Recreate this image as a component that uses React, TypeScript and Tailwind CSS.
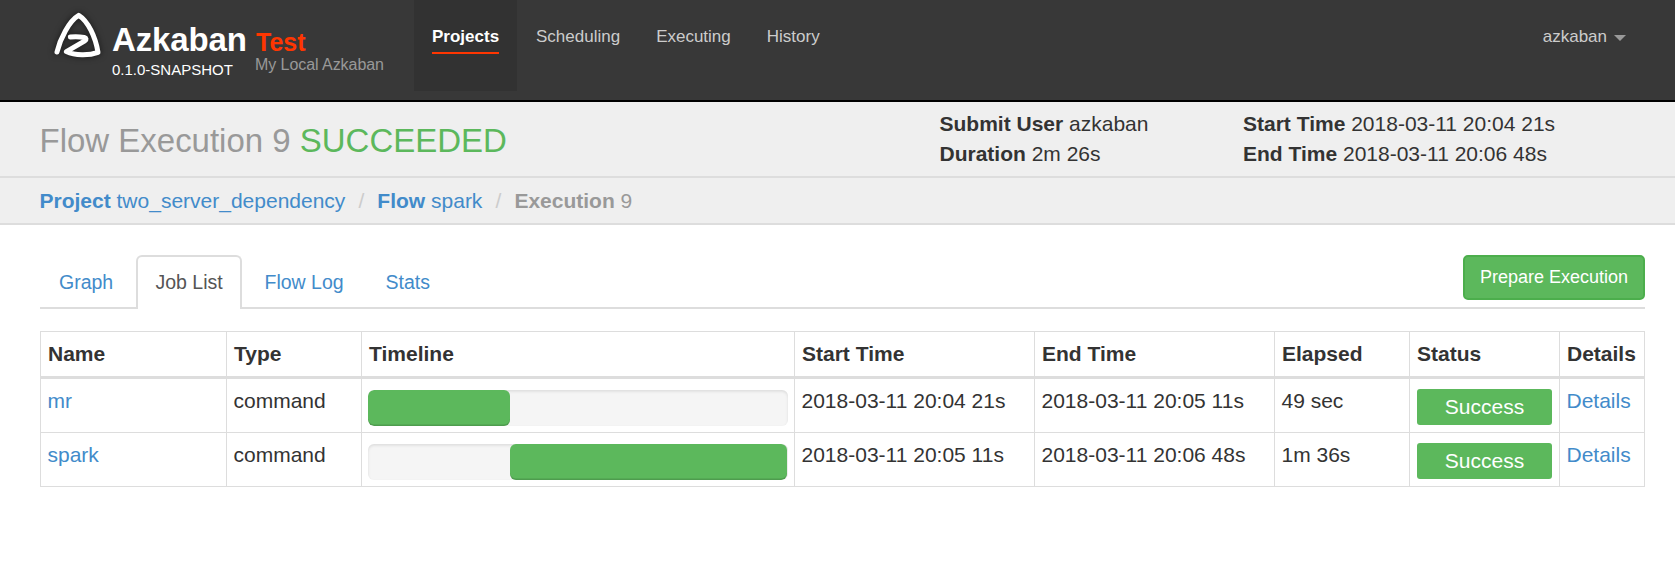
import React from "react";

type Job = {
  name: string;
  type: string;
  start: string;
  end: string;
  elapsed: string;
  offset: number;
  width: number;
};

const jobs: Job[] = [
  { name: "mr", type: "command", start: "2018-03-11 20:04 21s", end: "2018-03-11 20:05 11s", elapsed: "49 sec", offset: 0, width: 142 },
  { name: "spark", type: "command", start: "2018-03-11 20:05 11s", end: "2018-03-11 20:06 48s", elapsed: "1m 36s", offset: 142, width: 277 },
];

const columns = [
  { label: "Name", width: 186 },
  { label: "Type", width: 135 },
  { label: "Timeline", width: 433 },
  { label: "Start Time", width: 240 },
  { label: "End Time", width: 240 },
  { label: "Elapsed", width: 135 },
  { label: "Status", width: 150 },
  { label: "Details", width: 85 },
];

function Logo() {
  return (
    <svg
      className="block h-[60px] w-[60px] drop-shadow-[0_0_3px_rgba(0,0,0,0.6)]"
      viewBox="0 0 60 60"
      fill="none"
      stroke="#fff"
      strokeLinecap="round"
      strokeLinejoin="round"
    >
      <path
        strokeWidth="5"
        d="M9 48C12 35 21 17 30.7 11.4C40 17 47.5 33 50 48.4C41 51.8 27 51.8 18.4 47.6L36.8 36.8C38.6 35.4 38.4 34 36.2 33.4C31 32.6 27 32.6 22.4 33"
      />
    </svg>
  );
}

function Header() {
  return (
    <header className="flex h-[102px] items-start border-b-2 border-black bg-[#383838]">
      <div className="w-[64px] shrink-0 pl-[48px] pt-[4px]">
        <Logo />
      </div>
      <div className="w-[144px] shrink-0 pl-[48px] pt-[20px] whitespace-nowrap text-white">
        <div className="text-[33px] leading-[40px] font-bold tracking-[-0.15px]">Azkaban</div>
        <div className="text-[15px] leading-[20px]">0.1.0-SNAPSHOT</div>
      </div>
      <div className="w-[206px] shrink-0 pl-[47px] pt-[27px] whitespace-nowrap">
        <div className="pl-px text-[25px] leading-[30px] font-bold text-[#ff3601]">Test</div>
        <div className="text-[16px] leading-[15px] tracking-[-0.06px] text-[#999]">My Local Azkaban</div>
      </div>
      <nav className="flex text-[17px] leading-[24px] text-[#ccc]">
        <a className="h-[91px] w-[103px] bg-[#323232] px-[18px] pt-[25px] font-bold text-white">
          <span className="block h-[29px] border-b-2 border-[#ff3601]">Projects</span>
        </a>
        <a className="pr-[18px] pl-[19px] pt-[25px]">Scheduling</a>
        <a className="px-[18px] pt-[25px]">Executing</a>
        <a className="px-[18px] pt-[25px]">History</a>
      </nav>
      <div className="ml-auto flex items-center gap-[7px] pt-[25px] pr-[49px] text-[17px] leading-[24px] text-[#ccc]">
        azkaban
        <span className="mt-[2px] h-0 w-0 border-x-[6px] border-t-[6px] border-x-transparent border-t-[#999]" />
      </div>
    </header>
  );
}

function Field({ label, value }: { label: string; value: string }) {
  return (
    <p>
      <strong>{label}</strong> {value}
    </p>
  );
}

function Summary() {
  return (
    <section className="flex h-[76px] items-start border-b-2 border-[#ddd] bg-[#efefef] pl-[39.5px] text-[21px] leading-[30px] text-[#333] whitespace-nowrap">
      <h1 className="w-[900px] pt-[21px] text-[33px] leading-[36px] tracking-[-0.01px] text-[#999]">
        Flow Execution 9 <span className="text-[#5cb85c]">SUCCEEDED</span>
      </h1>
      <div className="w-[303.5px] pt-[7px]">
        <Field label="Submit User" value="azkaban" />
        <Field label="Duration" value="2m 26s" />
      </div>
      <div className="pt-[7px]">
        <Field label="Start Time" value="2018-03-11 20:04 21s" />
        <Field label="End Time" value="2018-03-11 20:06 48s" />
      </div>
    </section>
  );
}

function Breadcrumb() {
  return (
    <div className="flex h-[47px] items-start border-b-2 border-[#ddd] bg-[#efefef] pt-[8px] pl-[39.5px] text-[21px] leading-[30px] text-[#428bca] whitespace-nowrap">
      <a><strong>Project</strong> two_server_dependency</a>
      <span className="w-[32px] text-center text-[#ccc]">/</span>
      <a><strong>Flow</strong> spark</a>
      <span className="w-[32px] text-center text-[#ccc]">/</span>
      <span className="text-[#999]"><strong>Execution</strong> 9</span>
    </div>
  );
}

function Tabs() {
  return (
    <div className="flex h-[54px] items-start border-b-2 border-[#ddd] text-[19.5px] leading-[30px] text-[#428bca] whitespace-nowrap">
      <a className="w-[96px] pt-[12px] pl-[19px]">Graph</a>
      <a className="h-[54px] w-[106px] rounded-t-[6px] border-2 border-b-0 border-[#ddd] bg-white pt-[10px] pl-[17.5px] text-[#555]">Job List</a>
      <a className="w-[121px] pt-[12px] pl-[22.5px]">Flow Log</a>
      <a className="pt-[12px] pl-[22.5px]">Stats</a>
      <button className="ml-auto h-[45px] w-[182px] rounded-[5px] border-2 border-[#4cae4c] bg-[#5cb85c] pb-[1px] text-[18px] leading-[40px] text-white">
        Prepare Execution
      </button>
    </div>
  );
}

function JobTable() {
  const cell = "border-r border-b border-[#ddd] pt-[7px] pl-[6.5px] align-top";
  return (
    <table className="mt-[22px] w-[1605px] table-fixed border-separate border-spacing-0 border-t border-l border-[#ddd] text-left text-[21px] leading-[30px] text-[#333] whitespace-nowrap">
      <colgroup>
        {columns.map((c) => (
          <col key={c.label} style={{ width: c.width }} />
        ))}
      </colgroup>
      <thead>
        <tr className="h-[47px]">
          {columns.map((c) => (
            <th key={c.label} className="border-r border-b-3 border-[#ddd] pt-[7px] pl-[7px] align-top">
              {c.label}
            </th>
          ))}
        </tr>
      </thead>
      <tbody>
        {jobs.map((job) => (
          <tr key={job.name} className="h-[54px]">
            <td className={cell + " text-[#428bca]"}>{job.name}</td>
            <td className={cell}>{job.type}</td>
            <td className="border-r border-b border-[#ddd] pt-[11px] pl-[6px] align-top">
              <div className="h-[36px] w-[420px] overflow-hidden rounded-[6px] bg-[#f5f5f5] shadow-[inset_0_1.5px_3px_rgba(0,0,0,0.1)]">
                <div
                  className="h-full rounded-[6px] bg-[#5cb85c] shadow-[inset_0_-1.5px_0_rgba(0,0,0,0.15)]"
                  style={{ marginLeft: job.offset, width: job.width }}
                />
              </div>
            </td>
            <td className={cell}>{job.start}</td>
            <td className={cell}>{job.end}</td>
            <td className={cell}>{job.elapsed}</td>
            <td className="border-r border-b border-[#ddd] pt-[10px] pl-[7px] align-top">
              <div className="h-[36px] w-[135px] rounded-[3px] bg-[#5cb85c] text-center leading-[36px] text-white">Success</div>
            </td>
            <td className={cell + " text-[#428bca]"}>Details</td>
          </tr>
        ))}
      </tbody>
    </table>
  );
}

export default function App() {
  return (
    <div className="h-[568px] w-[1675px] overflow-hidden bg-white font-['Liberation_Sans',Arial,sans-serif]">
      <Header />
      <Summary />
      <Breadcrumb />
      <main className="pt-[30px] pr-[30px] pl-10">
        <Tabs />
        <JobTable />
      </main>
    </div>
  );
}
